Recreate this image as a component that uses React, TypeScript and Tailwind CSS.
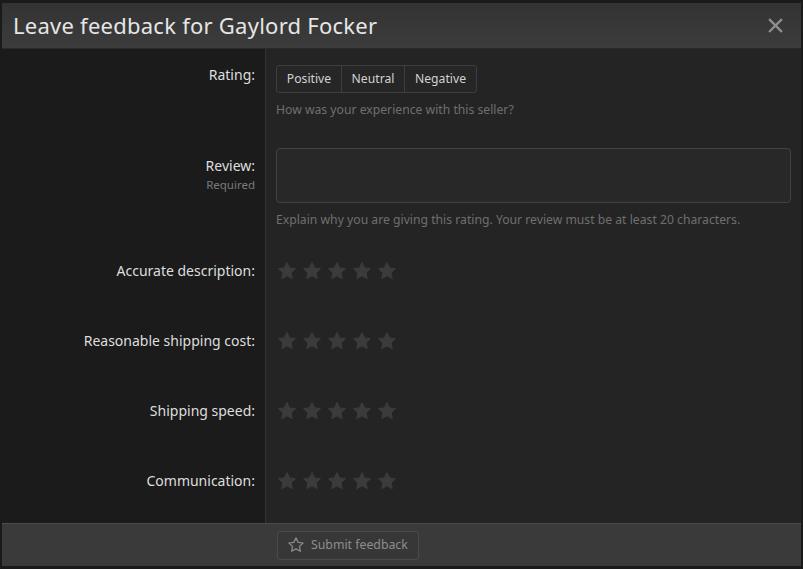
import React from "react";

const Star = ({ className = "" }: { className?: string }) => (
  <svg viewBox="0 0 24 24" className={className} fill="currentColor">
    <path
      d="M12 1.8l3.1 6.5 7.1.9-5.2 4.9 1.3 7.1L12 17.8l-6.3 3.4L7 14.1 1.8 9.2l7.1-.9z"
      strokeLinejoin="round"
      stroke="currentColor"
      strokeWidth="1.2"
    />
  </svg>
);

const StarOutline = ({ className = "" }: { className?: string }) => (
  <svg viewBox="0 0 24 24" className={className} fill="none" stroke="currentColor" strokeWidth="1.6" strokeLinejoin="round">
    <path d="M12 2.5l2.9 6 6.6.8-4.9 4.5 1.3 6.6L12 17.2l-5.9 3.2 1.3-6.6-4.9-4.5 6.6-.8z" />
  </svg>
);

const Stars = () => (
  <div className="flex gap-[5px] text-[#3b3b3b] pt-[1px]">
    {[0, 1, 2, 3, 4].map((i) => (
      <Star key={i} className="w-[20px] h-[20px]" />
    ))}
  </div>
);

const StarRow = ({ label }: { label: string }) => (
  <div className="flex h-[70px]">
    <div className="w-[263px] bg-[#1b1b1b] flex items-center justify-end pr-[10px] text-[14px] text-[#dedede]">
      {label}
    </div>
    <div className="flex-1 border-l border-[#333333] flex items-center pl-[11px]">
      <Stars />
    </div>
  </div>
);

export default function App() {
  return (
    <div
      className="w-[803px] h-[569px] bg-[#1a1a1a] pt-[3px] pl-[2px] pr-[2px] pb-[3px] overflow-hidden"
      style={{ fontFamily: '"Noto Sans", "Open Sans", sans-serif' }}
    >
      <div className="flex flex-col h-full bg-[#242424]">
        {/* header */}
        <div className="h-[46px] shrink-0 flex items-center justify-between pl-[11px] pr-[18px] bg-gradient-to-b from-[#333333] to-[#3c3c3c] border-b border-[#2a2a2a]">
          <div className="text-[22px] text-[#e6e6e6] tracking-[0.25px]">Leave feedback for Gaylord Focker</div>
          <svg viewBox="0 0 16 16" className="w-[15px] h-[15px] text-[#8f8f8f]" stroke="currentColor" strokeWidth="2.4" strokeLinecap="square">
            <path d="M2 2l12 12M14 2L2 14" />
          </svg>
        </div>

        {/* body */}
        <div className="flex-1 flex flex-col">
          {/* rating */}
          <div className="flex h-[83px]">
            <div className="w-[263px] bg-[#1b1b1b] text-right pr-[10px] pt-[16px] text-[14px] leading-[20px] text-[#dedede]">
              Rating:
            </div>
            <div className="flex-1 border-l border-[#333333] pl-[10px] pt-[16px]">
              <div className="inline-flex h-[28px] border border-[#3e3e3e] rounded-[3px] bg-[#262626] text-[12.2px] text-[#d2d2d2]">
                <div className="w-[64px] flex items-center justify-center">Positive</div>
                <div className="w-[63px] flex items-center justify-center border-l border-[#3e3e3e]">Neutral</div>
                <div className="w-[72px] flex items-center justify-center border-l border-[#3e3e3e]">Negative</div>
              </div>
              <div className="mt-[9px] text-[12.2px] leading-[16px] text-[#6f6f6f]">
                How was your experience with this seller?
              </div>
            </div>
          </div>

          {/* review */}
          <div className="flex h-[103px]">
            <div className="w-[263px] bg-[#1b1b1b] text-right pr-[10px] pt-[24px]">
              <div className="text-[14px] leading-[20px] text-[#dedede]">Review:</div>
              <div className="mt-[1px] text-[11.5px] leading-[16px] text-[#7a7a7a]">Required</div>
            </div>
            <div className="flex-1 border-l border-[#333333] pl-[10px] pr-[10px] pt-[16px]">
              <div className="h-[55px] border border-[#424242] rounded-[4px] bg-[#282828]" />
              <div className="mt-[9px] text-[12.2px] leading-[16px] text-[#6f6f6f]">
                Explain why you are giving this rating. Your review must be at least 20 characters.
              </div>
            </div>
          </div>

          <StarRow label="Accurate description:" />
          <StarRow label="Reasonable shipping cost:" />
          <StarRow label="Shipping speed:" />
          <StarRow label="Communication:" />

          <div className="flex flex-1">
            <div className="w-[263px] bg-[#1b1b1b]" />
            <div className="flex-1 border-l border-[#333333]" />
          </div>
        </div>

        {/* footer */}
        <div className="h-[43px] shrink-0 bg-[#3a3a3a] border-t border-[#4a4a4a] flex items-center pl-[275px]">
          <div className="h-[29px] flex items-center gap-[6px] pl-[9px] pr-[10px] border border-[#4b4b4b] rounded-[3px] bg-[#373737] text-[12.3px] text-[#8d8d8d]">
            <StarOutline className="w-[18px] h-[18px] text-[#8d8d8d]" />
            Submit feedback
          </div>
        </div>
      </div>
    </div>
  );
}
